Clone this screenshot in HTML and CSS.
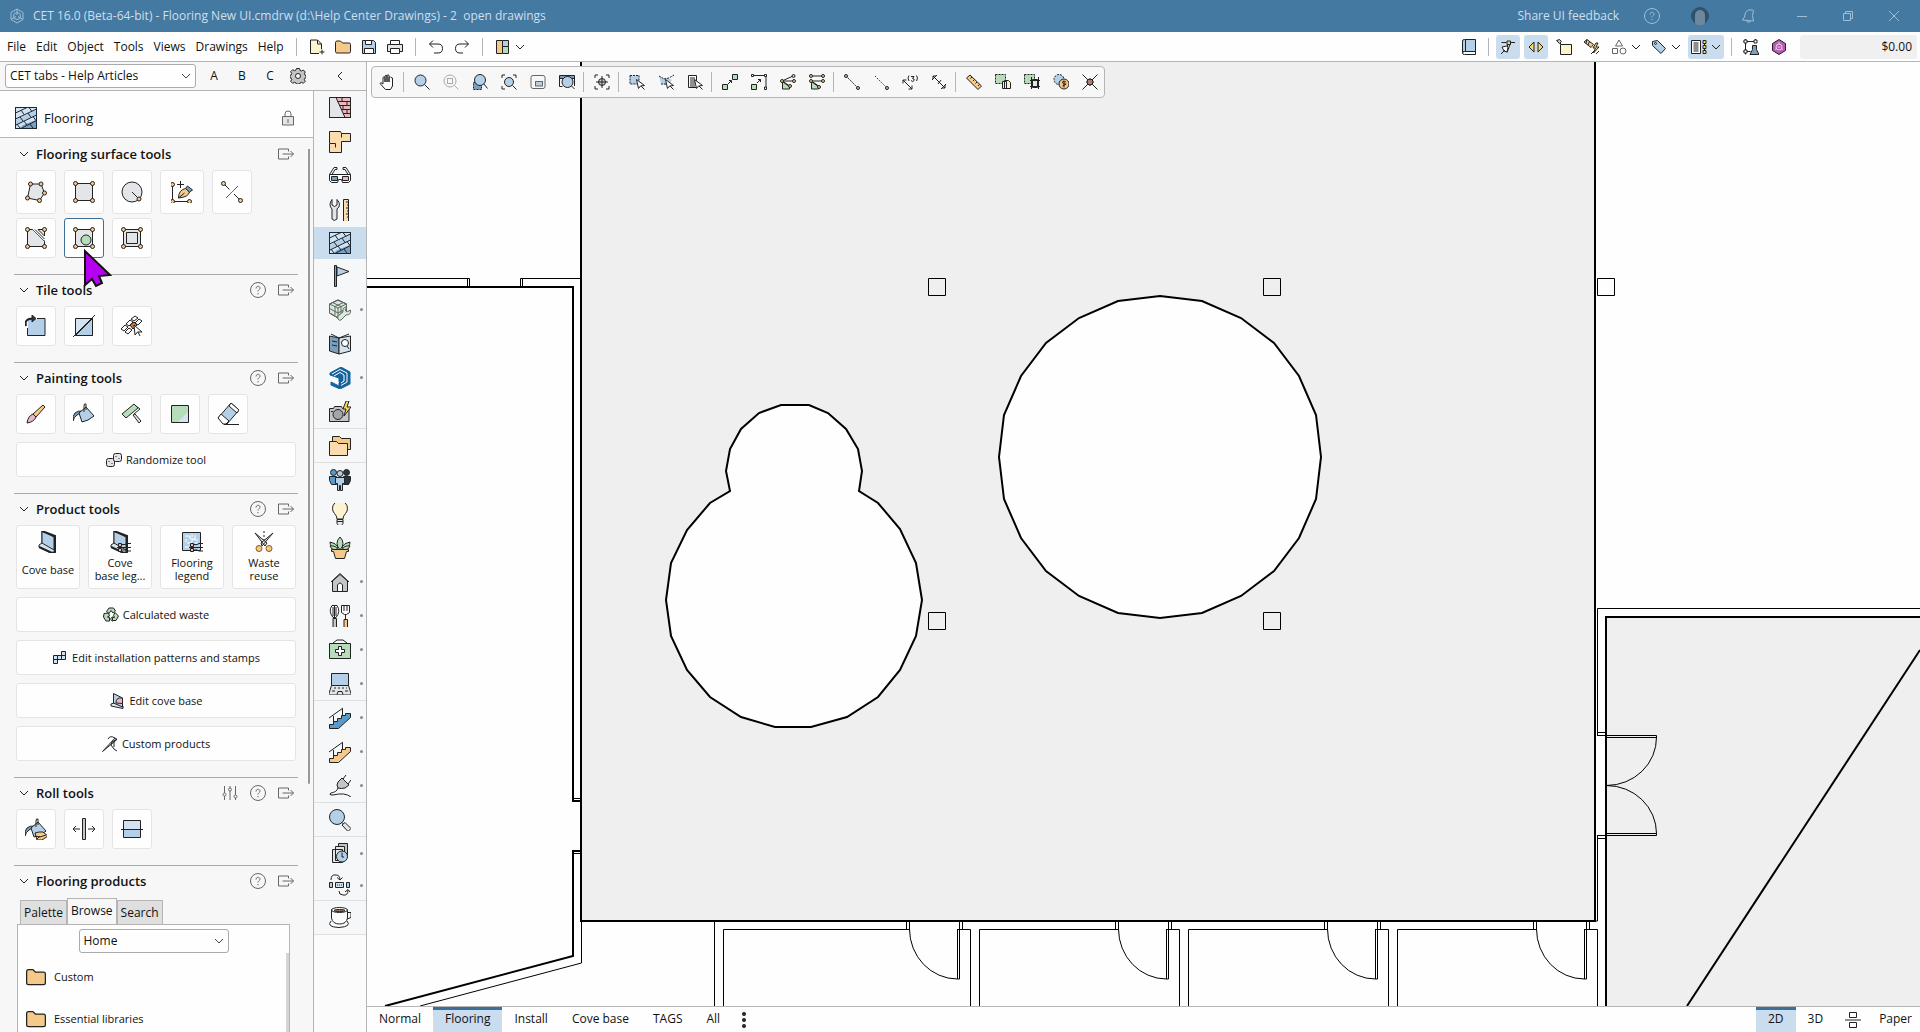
FILE: index.html
```html
<!DOCTYPE html>
<html lang="en">
<head>
  <meta charset="UTF-8" />
  <meta name="viewport" content="width=device-width, initial-scale=1.0"/>
  <title>CET 16.0 - Flooring New UI.cmdrw</title>
  <link rel="stylesheet" href="styles.css">
</head>
<body>
  <!-- icon sprite -->
  <svg class="sprite" aria-hidden="true">
    <!-- common 16px -->
    <symbol id="chev" viewBox="0 0 10 10"><path d="M1 3l4 4 4-4"/></symbol>
    <symbol id="help" viewBox="0 0 16 16"><circle cx="8" cy="8" r="7.500"/><path d="M6 6.500C6 3.500 10.200 3.700 10 6.300 9.800 7.800 8 7.700 8 9.500M8 11v1.300"/></symbol>
    <symbol id="popout" viewBox="0 0 16 16"><path d="M10.500 5.500v-2.500h-10v10h10v-2.500M4.500 8h11M12.500 5l3 3-3 3"/></symbol>
    <symbol id="sliders" viewBox="0 0 16 16"><path d="M2.500 1v7M2.500 11v4M8 1v2M8 6v9M13.500 1v9M13.500 13v2"/><circle cx="2.500" cy="9.500" r="1.500"/><circle cx="8" cy="4.500" r="1.500"/><circle cx="13.500" cy="11.500" r="1.500"/></symbol>
    <symbol id="lock" viewBox="0 0 16 16"><path class="f-gray" d="M2.500 6.500h11v8.500h-11z"/><path d="M5 6.500V4a3 3 0 0 1 6 0v2.500M8 9v4"/></symbol>
    <symbol id="logo" viewBox="0 0 16 16"><path d="M8 1l6 3.500v7L8 15l-6-3.500v-7z"/><circle cx="8" cy="8" r="3.500"/><path d="M8 1v6M2 11.500L7 8.500M14 11.500L9 8.500"/></symbol>
    <symbol id="bell" viewBox="0 0 16 16"><path d="M2.500 12l2-3 1-4.500q2.500-4 7-2.500l1 .5-1 5 1 5.500zM6.500 13q1 2.500 4 .5"/></symbol>

    <!-- menu bar -->
    <symbol id="new" viewBox="0 0 16 16"><path class="f-cream" d="M10 14.500H1.500v-13.500h7l4 4v5M8.500 1v4h4"/><path d="M13 10.500v5M10.500 13h5"/></symbol>
    <symbol id="folder" viewBox="0 0 16 16"><path class="f-orange" d="M.5 3.500q0-1.500 1.500-1.500h3.500l2 2h6.500q1.500 0 1.500 1.500v7q0 1.500-1.500 1.500h-12q-1.500 0-1.500-1.500z"/></symbol>
    <symbol id="save" viewBox="0 0 16 16"><path class="f-blue" d="M1.500 1.500h11l2 2v11h-13z"/><path class="f-white" d="M4.500 1.500h6v4h-6zM3.500 9.500h9v5h-9z"/></symbol>
    <symbol id="print" viewBox="0 0 16 16"><path class="f-gray" d="M.5 5.500h15v7H.5z"/><path class="f-white" d="M3.500 1.500h9v4h-9zM3.500 9.500h9v5h-9z"/></symbol>
    <symbol id="undo" viewBox="0 0 16 16"><path d="M5 1.500l-3.500 3.500L5 8.500M1.500 5H10q4.500 0 4.500 4.500T10 14H6"/></symbol>
    <symbol id="redo" viewBox="0 0 16 16"><path d="M11 1.500l3.500 3.500L11 8.500M14.500 5H6Q1.500 5 1.500 9.500T6 14h3"/></symbol>
    <symbol id="layout" viewBox="0 0 16 16"><path class="f-orange" d="M1.500 1.500h6v13h-6z"/><path class="f-blue" d="M7.500 1.500h6v6h-6z"/><path class="f-green" d="M7.500 7.500h6v7h-6z"/></symbol>
    <symbol id="book" viewBox="0 0 16 16"><path class="f-blue" d="M3.500.5h11v12h-11q-2 0-2 1.500v-12q0-1.500 2-1.500z"/><path class="f-white" d="M14.500 12.500v3h-11q-2 0-2-1.500t2-1.500z"/><path d="M4.500.5v12"/></symbol>
    <symbol id="snap" viewBox="0 0 16 16"><path d="M1.500 3.500h5M10.500 3.500H15M8 5.500l-1 2M10 5.500l-3 8"/><path class="f-white" d="M2 8l5-1 1 1-1 5-3-1z"/><path d="M1 15l4-4"/><path class="f-yellow" d="M7 2h3.500v3.500H7z"/></symbol>
    <symbol id="arrows" viewBox="0 0 16 16"><path class="f-yellow" d="M6 3v10L1 8zM10 3v10l5-5z"/></symbol>
    <symbol id="paste" viewBox="0 0 16 16"><path class="f-cream" d="M4.500 5.500h11v10h-11z"/><path class="f-dark-gray" d="M.5 1.500l3-1 2 2-2 2z"/><path d="M4 4l2 2"/></symbol>
    <symbol id="hammer" viewBox="0 0 16 16"><path class="f-orange" d="M0 3l3-2.500 6.500 5L7 8.500z"/><path d="M3 .5l-1 4M5.500 2.500L4 6"/><path class="f-yellow" d="M12 4l-3 5h2.500l-2 5 5.500-6h-3l2-4z"/><path d="M7 15l3-3M12 15l3-3"/></symbol>
    <symbol id="shapes" viewBox="0 0 16 16"><path d="M8 1l3.500 6h-7zM1.500 9.500h5v5h-5z"/><circle cx="12" cy="12" r="3"/></symbol>
    <symbol id="tag" viewBox="0 0 16 16"><path class="f-blue" d="M1.500 2.500l5-1 8 8-4.500 5-8.500-8z"/><circle cx="4.500" cy="4.500" r="1"/></symbol>
    <symbol id="listnodes" viewBox="0 0 16 16"><path class="f-white" d="M.5 1.500h9v13h-9z"/><path d="M2.500 4h5M2.500 6h5M2.500 8h5M2.500 10h5M2.500 12h5M13.500 3v10"/><path class="f-yellow" d="M12 1.500h3v3h-3zM12 6.500h3v3h-3zM12 11.500h3v3h-3z"/></symbol>
    <symbol id="lab" viewBox="0 0 16 16"><path d="M2.500 0v15.500M.5 2.500h13M.5 12.500h7M12.500 0v4"/><path class="f-white" d="M1 1h3v3H1zM1 11h3v3H1zM11 1h3v3h-3z"/><path class="f-steel" d="M9.500 6.500h4v4l2.500 5h-9l2.500-5z"/></symbol>
    <symbol id="hex" viewBox="0 0 16 16"><path class="f-purple" d="M8 .5l6.500 4v7L8 15.500l-6.500-4v-7z"/><circle class="s-pale" cx="8" cy="8" r="3"/><path class="s-pale" d="M6.500 8h3M8 3v2M4 10.500l2-1M12 10.500l-2-1"/></symbol>
    <symbol id="gear" viewBox="0 0 16 16"><path class="f-dark-gray" d="M6.500.5h3l.5 2 1.500.5 1.800-1 2 2-1 1.800.7 1.200 1 .5v2l-1 .5-.7 1.500 1 1.800-2 2-1.800-1-1.500.7-.5 1h-3l-.5-1-1.500-.7-1.800 1-2-2 1-1.800-.7-1.500-1-.5v-2l1-.5.700-1.500-1-1.800 2-2 1.800 1 1.500-.7z"/><circle class="f-white" cx="8" cy="8" r="2.500"/></symbol>

    <!-- canvas toolbar -->
    <symbol id="hand" viewBox="0 0 16 16"><path class="f-white" d="M4 10V3.500q1-1.500 2 0V8 2q1-1.500 2 0v6-6.500q1-1.500 2 0V8 3.500q1.500-1.500 2 0l1.500.5v8l-2 3.500H6.500L1 9.500q.5-2 3 .5z"/></symbol>
    <symbol id="lens" viewBox="0 0 16 16"><circle class="f-blue" cx="6.500" cy="6.500" r="5.500"/><path d="M10.500 10.500l5 5"/></symbol>
    <symbol id="lens-off" viewBox="0 0 16 16"><g class="s-light"><circle cx="7" cy="7" r="6"/><rect x="4.500" y="4.500" width="5" height="5"/><path d="M11.500 11.500l4 4"/></g></symbol>
    <symbol id="lens-area" viewBox="0 0 16 16"><path class="f-steel" stroke-dasharray="2 1" d="M1.500 8.500h8v7h-8z"/><circle class="f-blue" cx="8" cy="6" r="5.500"/><path d="M12 10l3.500 4.500"/></symbol>
    <symbol id="lens-fit" viewBox="0 0 16 16"><path d="M1 4V1h3M12 1h3v3M1 12v3h3"/><circle class="f-blue" cx="8" cy="8" r="4.500"/><path d="M11.500 11.500l4 4"/></symbol>
    <symbol id="mini" viewBox="0 0 16 16"><rect x="1" y="1.500" width="14" height="13" rx="2"/><rect class="f-blue" x="5.500" y="7.500" width="7" height="4.500"/></symbol>
    <symbol id="lens-window" viewBox="0 0 16 16"><path class="f-steel" d="M.5 1.500h15v3H.5z"/><path d="M.5 4v8.500h3M15.500 4v8"/><circle class="f-blue" cx="8.500" cy="8" r="5.500"/><path d="M12.500 12l3 3"/></symbol>
    <symbol id="target" viewBox="0 0 16 16"><path d="M1 4V1h3M12 1h3v3M1 12v3h3M12 15h3v-3M8 2v12M2 8h12"/><circle class="f-dark-gray" cx="8" cy="8" r="3.500"/><path d="M4.500 8h7M8 4.500v7"/></symbol>
    <symbol id="cursor" viewBox="0 0 16 16"><path class="f-white" d="M7.500 5.500l2 9 2-2.500 4-.5z"/><path d="M12 12l3.500 3.500"/></symbol>
    <symbol id="sel-rect" viewBox="0 0 16 16"><path class="f-blue" stroke-dasharray="2 1" d="M1 1.500h9v8.500H1z"/><use href="#cursor"/></symbol>
    <symbol id="sel-line" viewBox="0 0 16 16"><path class="f-blue s-none" d="M1 2l4 2 5 0 4 2-4 5-7-1z"/><path stroke-dasharray="2 1" d="M1 2l5 3 5-1 5-3M3 10h5"/><use href="#cursor"/></symbol>
    <symbol id="sel-list" viewBox="0 0 16 16"><path class="f-white" d="M1.500 1.500h8v12h-8z"/><path d="M3 4h5M3 6h5M3 8h5M3 10h5M3 12h5"/><use href="#cursor"/></symbol>
    <symbol id="link2" viewBox="0 0 16 16"><path class="f-green" d="M.5 10.500h5v5h-5zM10.500.5h5v5h-5z"/><path d="M6 10l3-3M7 6.500h2.500V9"/></symbol>
    <symbol id="stretch" viewBox="0 0 16 16"><path class="f-green" d="M.5 10.500h5v5h-5z"/><path d="M1 1.500h14v13M6 9l3.500-3.500M7 5.500h2.500V8"/><path class="f-white" d="M.5.500h2v2h-2zM13.500.5h2v2h-2zM13.500 13h2v2.500h-2z"/></symbol>
    <symbol id="poly-a" viewBox="0 0 16 16"><path class="f-green" d="M2.500 7l7 5v3h-7z"/><path d="M2 7l11-5M3 8l7 5M2 7h8l4 0"/><g class="f-orange"><circle cx="2" cy="7" r="1.500"/><circle cx="13.500" cy="2" r="1.500"/><circle cx="10" cy="12" r="1.500"/><circle cx="14" cy="7" r="1.500"/></g></symbol>
    <symbol id="poly-b" viewBox="0 0 16 16"><path class="f-green" d="M2.500 7l7 5v3h-7z"/><path d="M2 2h12M2 7h12M3 8l7 5"/><g class="f-orange"><circle cx="2" cy="2" r="1.500"/><circle cx="14" cy="2" r="1.500"/><circle cx="2" cy="7" r="1.500"/><circle cx="10" cy="13" r="1.500"/><circle cx="14" cy="7" r="1.500"/></g></symbol>
    <symbol id="line-a" viewBox="0 0 16 16"><path stroke-dasharray="2 1" d="M2 2l12 12"/><circle class="f-dark-gray" cx="2" cy="2" r="1.500"/><circle class="f-dark-gray" cx="14" cy="14" r="1.500"/></symbol>
    <symbol id="line-b" viewBox="0 0 16 16"><path stroke-dasharray="1.500 1.500" d="M2 2l12 12"/><circle class="f-dark-gray" cx="14" cy="14" r="1.500"/></symbol>
    <symbol id="dim-3" viewBox="0 0 16 16"><path d="M1 6l9 9M1 9.500V6h3.500M10 11.500V15H6.500M7 1.500q-2 2.500 0 5.500M14.500 1.500q2 2.500 0 5.500M9 2.500h3l-1.500 2q2.500 0 1.500 2t-3 0"/></symbol>
    <symbol id="dim" viewBox="0 0 16 16"><path d="M2 2l12 12M1 6l5-5M10 15l5-5M2 5V2h3M14 11v3h-3M7 10l3-4"/></symbol>
    <symbol id="ruler" viewBox="0 0 16 16"><path class="f-orange" d="M.5 4l3.500-3 11.500 11-3.500 3.500z"/><path d="M6 3L4.500 4.500M8.500 5.500L7 7M11 8L9.500 9.500M13.500 10.500L12 12"/></symbol>
    <symbol id="copy" viewBox="0 0 16 16"><path class="f-green" stroke-dasharray="2 1" d="M.5.500h10v9H.5z"/><path class="f-cream" d="M7.500 7.500h4v7h-4zM9.500 6.500h4l2 2v6h-6z"/></symbol>
    <symbol id="array" viewBox="0 0 16 16"><path class="f-green" stroke-dasharray="2 1" d="M.5.500h10v9H.5z"/><path class="f-gray" d="M8.500 5.500h5v8h-5z"/><path d="M7.500 3v12M14.500 3v12M6 6.500h10M6 12.500h10"/></symbol>
    <symbol id="cost" viewBox="0 0 16 16"><circle class="f-blue" stroke-dasharray="2 1" cx="6" cy="5.500" r="5"/><circle class="f-orange" cx="11" cy="10" r="5"/><path d="M13 8q-4-1.500-3.500.5t3 1.500-3 2M11 6.500v7"/></symbol>
    <symbol id="cross" viewBox="0 0 16 16"><path d="M.5.500l15 15M15.500.5l-15 15M4 8h8M8 4v8"/><circle class="f-brown" cx="8" cy="8" r="3"/></symbol>

    <!-- flooring tools -->
    <symbol id="t-poly" viewBox="0 0 22 22"><path class="f-gray" d="M5.500 3h10.500l3.500 9-5 7.500-12-2.500z"/><g class="f-orange"><circle cx="5.500" cy="3" r="2"/><circle cx="16" cy="3" r="2"/><circle cx="19.500" cy="12" r="2"/><circle cx="14.500" cy="19.500" r="2"/><circle cx="2.500" cy="17" r="2"/></g></symbol>
    <symbol id="t-corners" viewBox="0 0 22 22"><g class="f-orange"><circle cx="2.500" cy="2.500" r="2"/><circle cx="19.500" cy="2.500" r="2"/><circle cx="2.500" cy="19.500" r="2"/><circle cx="19.500" cy="19.500" r="2"/></g></symbol>
    <symbol id="t-rect" viewBox="0 0 22 22"><path class="f-gray" d="M2.500 2.500h17v17h-17z"/><use href="#t-corners"/></symbol>
    <symbol id="t-circle" viewBox="0 0 22 22"><circle class="f-gray" cx="11" cy="11" r="10"/><path d="M11 11l7 7"/><circle class="f-orange" cx="18" cy="18" r="2"/></symbol>
    <symbol id="t-pen" viewBox="0 0 22 22"><path d="M1.500 4v16.500h16M9.500 0v7M6 3.500h7"/><path class="f-orange" d="M7.500 17q0-8 7-9.500l4 3.500q-1 5-11 6z"/><path class="f-steel" d="M14.500 7.500l2-2.500 5 4-3 2z"/><path d="M7.500 17l6-5"/><g class="f-orange"><circle cx="1.500" cy="3.500" r="2"/><circle cx="1.500" cy="20.500" r="2"/><circle cx="18.500" cy="20.500" r="2"/></g></symbol>
    <symbol id="t-cut" viewBox="0 0 22 22"><path d="M2.500 2.500l6 6M13 13l6 6"/><path class="s-red" d="M5 17L17 5"/><circle class="f-orange" cx="2.500" cy="2.500" r="2"/><circle class="f-orange" cx="19.500" cy="19.500" r="2"/></symbol>
    <symbol id="t-split" viewBox="0 0 22 22"><path class="f-gray" d="M8 2.500H2.500v17h17v-6M13 2.500h6.500V9"/><path class="s-red" d="M7.500 2.500l12 12"/><path d="M10 2.500l9.500 9.500M13 2.500L19.500 9"/><use href="#t-corners"/></symbol>
    <symbol id="t-hole" viewBox="0 0 22 22"><path class="f-gray" d="M2.500 2.500h17v17h-17z"/><circle class="f-green" cx="13" cy="13" r="5"/><use href="#t-corners"/></symbol>
    <symbol id="t-inset" viewBox="0 0 22 22"><path class="f-gray" d="M2.500 2.500h17v17h-17z"/><path d="M5.500 5.500h11v11h-11z"/><use href="#t-corners"/></symbol>
    <symbol id="t-rotate" viewBox="0 0 22 22"><path class="f-blue s-none" d="M3 4h17v17H3z"/><path d="M12 3.500h8v17H2.500V13"/><path class="s-bold" d="M1 11Q-1 3.500 8 3.500"/><path class="f-black" d="M7 0l4 3.500L7 7z"/></symbol>
    <symbol id="t-diag" viewBox="0 0 22 22"><path class="f-light-blue" d="M2.500 3.500h17v17h-17z"/><path class="f-blue" d="M19.500 3.500v17h-17z"/><path d="M0 22L22 0"/></symbol>
    <symbol id="t-planks" viewBox="0 0 22 22"><path class="f-white" d="M0 14l4-4 3 2-4 4zM5 9l4-4 3 2-4 4zM10 4l4-3 3 2-4 3zM4 17l4-4 3 2-4 4zM14 8l4-4 3 2-4 4z"/><path class="f-deep-orange" d="M9 10l4-3 3 3-4 4z"/><path class="f-white" d="M13 10l1 10 2.500-3 4.500 0z"/><path d="M17 17l2 4"/></symbol>
    <symbol id="t-brush" viewBox="0 0 22 22"><path class="f-orange" d="M8 11L18 2l2 2-9 10z"/><path class="f-pink" d="M2 20q1-7 6-9l3 3q-2 5-9 6z"/></symbol>
    <symbol id="t-bucket" viewBox="0 0 22 22"><path class="f-steel" d="M0 18q-1-11 10-10l-6 4q-3 2-4 6z"/><path class="f-blue" d="M13 4l8 9q-6 5-12 6L6 10z"/><path d="M11 9V3q0-3 2-2v6"/></symbol>
    <symbol id="t-roller" viewBox="0 0 22 22"><path class="f-green" d="M1 11L13 1l4 4L5 15z"/><path d="M15 3l4 3-6 5"/><path class="f-gray" d="M12 12l2-1 6 7-2 2z"/></symbol>
    <symbol id="t-square" viewBox="0 0 22 22"><path class="f-green" d="M2.500 2.500h17v17h-17z"/><path class="f-light-blue s-none" d="M19 9v10H9z"/></symbol>
    <symbol id="t-eraser" viewBox="0 0 22 22"><path class="f-blue" d="M1 15L14 0l8 7-12 14H7z"/><path class="f-white" d="M1 15l3-4 8 7-3 3H6zM14 0l8 7-2 3-8-7z"/><path d="M7 21.500h15"/></symbol>
    <symbol id="t-pour" viewBox="0 0 22 22"><use href="#t-bucket"/><path class="f-orange" d="M10 15l4-1 4 0 5 4-6 4h-5z"/><path d="M10 18l5 1 6-2M12 21l3-3"/></symbol>
    <symbol id="t-seam" viewBox="0 0 22 22"><path class="f-dark-gray" d="M9.500.5h3v21h-3z"/><path d="M0 11h7M3 8l-3 3 3 3M15 11h7M19 8l3 3-3 3"/></symbol>
    <symbol id="t-join" viewBox="0 0 22 22"><path class="f-light-blue" d="M2.500 2.500h17v9h-17z"/><path class="f-blue" d="M2.500 11.500h17v8h-17z"/><path d="M-1 11.500h24"/></symbol>
    <symbol id="p-cove" viewBox="0 0 22 22"><path class="f-light-blue" d="M2 14l3-2V0l13 6v15l-3 1.500L2 16z"/><path class="f-blue" d="M5 0l12 6v13L5 12z"/><path class="s-bold" d="M5 0l13 5v16l-3 1L2 16"/></symbol>
    <symbol id="p-plug" viewBox="0 0 22 22"><path class="f-pink" d="M9.500 12.500h3v3h-3zM9.500 17.500h3v3h-3z"/><path d="M13 13.500h3l2-1h5M13 19h3l2 1h5M8 16.500h15"/></symbol>
    <symbol id="p-covelegend" viewBox="0 0 22 22"><use href="#p-cove"/><use href="#p-plug"/></symbol>
    <symbol id="p-legend" viewBox="0 0 22 22"><path class="f-blue" d="M1.500 1.500h18v18h-18z"/><path class="s-white" d="M4 5h5v3h5M6 12h4l2-4M4 16h4M14 4v5h3M5 8v3M11 3v3M14 12h3"/><use href="#p-plug"/></symbol>
    <symbol id="p-scissors" viewBox="0 0 22 22"><path class="f-gray" d="M2 2l10 13 2-3zM20 2L9 15l-1-3z"/><path stroke-dasharray="2 2" d="M11 0v9"/><circle class="f-orange s-brown" cx="6" cy="17.500" r="3"/><circle class="f-orange s-brown" cx="16" cy="17.500" r="3"/></symbol>
    <symbol id="w-dice" viewBox="0 0 16 16"><rect class="f-gray" x=".5" y="6.500" width="8" height="8" rx="2"/><rect class="f-gray" x="7.500" y="1.500" width="8" height="8" rx="2"/><path d="M3 9v1M6 11v1M10 4v1M13 6v1"/></symbol>
    <symbol id="w-recycle" viewBox="0 0 16 16"><g class="f-green"><path d="M3.500 4.500L6 1h4.500l2 3-2.500 2-2-2.500-2 3z"/><path d="M12 5.500L15.500 9l-2.500 4.500H9.500v-3h2l-1-2z"/><path d="M1 6.500l4.500-.5 1 3-2 1 2 .5V14H3L.5 10z"/></g><path d="M9.500 9.500L7.500 12l2 2.500"/></symbol>
    <symbol id="w-pattern" viewBox="0 0 16 16"><path class="f-light-blue" d="M1.500 5.500h4v8h-4zM5.500 5.500h4v4h-4zM9.500 1.500h4v8h-4z"/><path d="M1.500 9.500h8M9.500 5.500h4"/></symbol>
    <symbol id="w-cove" viewBox="0 0 16 16"><path class="f-gray" d="M2 11l3-1 9 3v2.500L2 13z"/><path class="f-blue" d="M4.500.5l9 4.500v9l-9-4z"/><path class="f-pink" d="M7 10q0-6 6.500-5v5.500z"/></symbol>
    <symbol id="w-custom" viewBox="0 0 16 16"><path class="f-gray" d="M.5 15.500L13 2l2 1.500z"/><path d="M13 2Q8-1 6 3M15 3l-5 3-1 3 3 4 3 2M12 5v6"/></symbol>

    <!-- side bar -->
    <symbol id="s-wall" viewBox="0 0 22 22"><path class="f-gray" d="M.5.500h21v20H.5z"/><path class="f-pink" d="M7 .5h14.500v20H16z"/><path d="M0 20.500h22M8.500 4.500h13M10.500 8.500h11M12 12.500h9M14 16.500h7M13 .5v4M18 4.500v4M14 8.500v4M18 12.500v4"/></symbol>
    <symbol id="s-plan" viewBox="0 0 22 22"><path class="f-light-orange" d="M.5.500h11l1 2h9v8h-9v11H.5v-9z"/><path d="M1 12.500h5.500v4M12.500 2.500v4"/></symbol>
    <symbol id="s-glasses" viewBox="0 0 22 22"><path class="f-white" d="M.5 9.500h21v6l-2 2h-6l-1-3h-3l-1 3h-6l-2-2z"/><path class="f-steel" d="M2.500 11.500h6v4h-6z"/><path class="f-pink" d="M13.500 11.500h6v4h-6z"/><path d="M.5 9.500L5 2.500l3 0v2l-2 0-3 5M21.500 9.500L17 2.500l-3 0v2l2 0 3 5"/></symbol>
    <symbol id="s-tools" viewBox="0 0 22 22"><path class="f-gray" d="M3 .5Q-1 6 3 10v10q2 3 5 0V10q5-4 0-9.500V6L5.500 7.500 3 6z"/><path class="f-light-orange" d="M14.500.5h5v22h-5z"/><path d="M17 3h3M18 6h2M17 9h3M18 12h2M17 15h3M18 18h2"/></symbol>
    <symbol id="s-floor" viewBox="0 0 22 22"><path class="f-light-blue" d="M.5.500h21v21H.5z"/><path class="f-steel s-none" d="M21 13v8H5l3-3z"/><path class="f-blue s-none" d="M1 13L21 3v5L1 18z"/><path class="s-mid" d="M.5.500h21v21H.5zM.5 6L12 .5M.5 12L21.500 2M1 18L21.500 8M6 21.500L21.500 13.500M6 3l3 4.500M14 .5l3 4M5 10l3 4M13 6l3 4.500M9 14l3 4M18 9.500l3 4M15 17l3 4M2 17l3 4"/></symbol>
    <symbol id="s-flag" viewBox="0 0 22 22"><path class="f-blue" d="M8 2l12 4.500L8 11z"/><path class="f-steel" d="M5.500.5h2v21h-2z"/></symbol>
    <symbol id="s-cube" viewBox="0 0 22 22"><path class="f-pale-green" d="M.5 5L9 1l8.500 4v9L9 19 .5 14z"/><path class="s-mute" d="M.5 5L9 1l8.500 4v9L9 19 .5 14zM.5 5L9 9l8.500-4M9 9v10M3.500 3.500l8.500 4v9M14.500 3.500L6 7.500v9M.5 9.500L9 14l8.500-4.500"/><path class="f-pale-green s-mute" d="M9 20q-1-2 1-4l4-3q-1-5 4-5l-2 3 2 2 3.500-2q1 5-4.500 5l-5 5q-2 1-3-1z"/></symbol>
    <symbol id="s-catalog" viewBox="0 0 22 22"><path class="f-steel" d="M.5 3l9.500 2v16L.5 18z"/><path class="f-light-blue" d="M21.500 3L10 5v16l11.500-3z"/><circle class="f-white" cx="16" cy="10" r="3.500"/><path d="M18 13l2 3M3 8l5 1M3 12l5 1M2 1l8 4 10-4"/></symbol>
    <symbol id="s-sketch" viewBox="0 0 22 22"><path class="f-sketch" d="M1 6L12 0l9 5v12l-10 5-9-4v-3l8 4V11L1 8z"/><path class="s-white" d="M3 7l8-4.500L18 6v9l-6 3.500M5 9l6-3.500 4 2.500v6l-3 2M2 12l8 3.500"/></symbol>
    <symbol id="s-camera" viewBox="0 0 22 22"><path class="f-dark-gray" d="M.5 7.500h4l1-2h7l1 2h6.500v13H.5z"/><circle class="f-dim" cx="9" cy="13.500" r="5"/><path d="M2 10.500h2"/><path class="f-yellow" d="M17 0l-3 8h3l-2 7 7-9h-4l2-6z"/></symbol>
    <symbol id="s-folders" viewBox="0 0 22 22"><path class="f-orange" d="M3.500 1.500h7l2 2h9v11h-18z"/><path class="f-light-orange" d="M.5 6.500h7l2 2h9v12H.5z"/></symbol>
    <symbol id="s-people" viewBox="0 0 22 22"><circle class="f-deep-blue" cx="4.500" cy="3.500" r="3"/><path class="f-deep-blue" d="M.5 7.500h7v8h-5l-2-4z"/><circle class="f-black" cx="17.500" cy="3.500" r="3"/><path class="f-black" d="M14.500 7.500h7v4l-2 4h-5z"/><circle class="f-blue" cx="11" cy="4.500" r="3"/><path class="f-blue" d="M6.500 8.500h9v6h-2v7h-2v-5h-1v5h-2v-7h-2z"/></symbol>
    <symbol id="s-bulb" viewBox="0 0 22 22"><path class="f-cream" d="M8 16q0-3-2.500-5.500A7.500 7.500 0 1 1 16.500 10.500Q14 13 14 16z"/><path class="f-gray" d="M8 16.500h6v4l-1.500 2h-3l-1.500-2zM8 18.500h6"/></symbol>
    <symbol id="s-plant" viewBox="0 0 22 22"><g class="f-green"><path d="M7 13Q1 11 1 5q6 1 8 5zM15 13q6-2 6-8-6 1-8 5z"/><path d="M11 13Q5 6 11 0q6 6 0 13z"/><path d="M9 13Q7 8 1 9q1 4 6 4zM13 13q2-5 8-4-1 4-6 4z"/></g><path class="f-orange" d="M2.500 12.500h17v2h-2l-2 7h-9l-2-7h-2z"/></symbol>
    <symbol id="s-house" viewBox="0 0 22 22"><path class="f-dark-gray" d="M3.500 20.500V10L11 3.500l7.500 6.500v10.500z"/><path class="f-white" d="M8.500 20.500V14q2.500-4 5 0v6.500z"/><path d="M2 11l9-8.500L20 11"/></symbol>
    <symbol id="s-kitchen" viewBox="0 0 22 22"><path class="f-white" d="M3 .5h5q4 6-1 12H4Q-1 6 3 .5zM4 2v9M7 2v9M5.500 1v11M12.500.5h8v7l-3 2h-2l-3-2zM15 1v5M18 1v5M16.500 10v4"/><path class="f-dark-gray" d="M4 13.500h3.500v9H4z"/><path class="f-orange" d="M15 14.500h3.500v8H15z"/></symbol>
    <symbol id="s-medical" viewBox="0 0 22 22"><path d="M4 4L8 1h6l4 3"/><path class="f-green" d="M.5 4.500h21v15H.5z"/><path class="f-white" d="M9.500 7.500h3v3h3v3h-3v3h-3v-3h-3v-3h3z"/></symbol>
    <symbol id="s-laptop" viewBox="0 0 22 22"><path class="f-blue" d="M2.500.5h17v12h-17z"/><path class="f-gray" d="M2.500 12.500h17l3 9.500h-23z"/><path d="M5 15h2M9 15h2M13 15h2M17 15h1M3 18h3M16 18h3M8 21.500l1-3h4l1 3"/></symbol>
    <symbol id="s-stairs" viewBox="0 0 22 22"><path d="M.5 21.500v-4h4v-3h4v-3h4v-3h4v-2h5v4l-12 11z"/><path d="M0 11L14 1M4.500 9v7M13.500 2v7"/></symbol>
    <symbol id="s-power" viewBox="0 0 22 22"><path class="f-dark-gray" d="M9 7l4-4 7 7-4 3q-4 1-7 0-2-3 0-6z"/><path d="M14 4l3-4M19 9l3-4M9 13q-1 4-7 5-3 2 2 2 12-3 18 2"/></symbol>
    <symbol id="s-search" viewBox="0 0 22 22"><circle class="f-blue" cx="8" cy="8" r="7.500"/><path class="f-gray" d="M13 16l3-2.500 6 6-3 3zM12.500 13l2 2"/></symbol>
    <symbol id="s-history" viewBox="0 0 22 22"><path class="f-dark-gray" d="M9.500 1.500h9v14h-9z"/><path class="f-gray" d="M6.500 4.500h9v14h-9zM3.500 7.500h10v13h-10z"/><circle class="f-blue" cx="13" cy="14.500" r="5.500"/><path d="M13 10.500v4.500h2"/></symbol>
    <symbol id="s-flow" viewBox="0 0 22 22"><path class="f-blue" d="M.5 8.500h3v5h-3zM17.500 8.500h3v5h-3z"/><path class="f-light-blue" d="M6.500 8.500h8v5h-8z"/><path d="M8 11h1M10 11h1M12 11h1M2 6q0-6 5-5 4 0 4 5M8 3.500l3 2.500 2.500-2.500M19 16q0 6-5 5-4 0-4-4M16 18l3-2.500 2 2.500"/></symbol>
    <symbol id="s-coffee" viewBox="0 0 22 22"><path class="f-white" d="M2 14q-5 6 8 6.500 13-1 8-6.500"/><path class="f-white" d="M18 5.500h4v5l-4 1.500"/><path class="f-white" d="M2.500 3v8q1 6 8 6t8-6V3z"/><ellipse class="f-white" cx="10.500" cy="3" rx="8" ry="2.500"/><ellipse class="f-brown" cx="10.500" cy="3.500" rx="5.500" ry="1"/></symbol>
  </svg>

  <header class="titlebar">
    <svg class="icon16"><use href="#logo"/></svg>
    <span class="title">CET 16.0 (Beta-64-bit) - Flooring New UI.cmdrw (d:\Help Center Drawings) - 2&nbsp; open drawings</span>
    <a class="feedback" href="#">Share UI feedback</a>
    <button class="title-btn" aria-label="Help"><svg class="icon16"><use href="#help"/></svg></button>
    <button class="title-btn avatar-btn" aria-label="Account"><span class="avatar"><span class="avatar-head"></span></span></button>
    <button class="title-btn bell-btn" aria-label="Notifications"><svg class="icon16"><use href="#bell"/></svg></button>
    <button class="title-btn" aria-label="Minimize"><svg class="icon10" viewBox="0 0 10 10"><path d="M0 5.500h10"/></svg></button>
    <button class="title-btn" aria-label="Restore"><svg class="icon10" viewBox="0 0 10 10"><path d="M.5 2.500h7v7h-7zM2.500 2.500v-2h7v7h-2"/></svg></button>
    <button class="title-btn" aria-label="Close"><svg class="icon10" viewBox="0 0 10 10"><path d="M0 0l10 10M10 0L0 10"/></svg></button>
  </header>

  <nav class="menubar">
    <div class="menus">
      <button>File</button><button>Edit</button><button>Object</button><button>Tools</button><button>Views</button><button>Drawings</button><button>Help</button>
    </div>
    <span class="sep"></span>
    <div class="quick">
      <button aria-label="New"><svg class="icon16"><use href="#new"/></svg></button>
      <button aria-label="Open"><svg class="icon16"><use href="#folder"/></svg></button>
      <button aria-label="Save"><svg class="icon16"><use href="#save"/></svg></button>
      <button aria-label="Print"><svg class="icon16"><use href="#print"/></svg></button>
    </div>
    <span class="sep"></span>
    <div class="quick">
      <button aria-label="Undo"><svg class="icon16"><use href="#undo"/></svg></button>
      <button aria-label="Redo"><svg class="icon16"><use href="#redo"/></svg></button>
    </div>
    <span class="sep"></span>
    <button class="drop" aria-label="Layout"><svg class="icon16"><use href="#layout"/></svg><svg class="icon10"><use href="#chev"/></svg></button>

    <div class="menubar-right">
      <button class="mode" aria-label="Catalogue"><svg class="icon16"><use href="#book"/></svg></button>
      <span class="sep"></span>
      <button class="mode on" aria-label="Snap"><svg class="icon16"><use href="#snap"/></svg></button>
      <button class="mode on" aria-label="Mirror"><svg class="icon16"><use href="#arrows"/></svg></button>
      <button class="mode" aria-label="Paste"><svg class="icon16"><use href="#paste"/></svg></button>
      <button class="mode" aria-label="Build"><svg class="icon16"><use href="#hammer"/></svg></button>
      <button class="drop" aria-label="Shapes"><svg class="icon16 faded"><use href="#shapes"/></svg><svg class="icon10"><use href="#chev"/></svg></button>
      <button class="drop" aria-label="Tags"><svg class="icon16"><use href="#tag"/></svg><svg class="icon10"><use href="#chev"/></svg></button>
      <button class="drop on" aria-label="Lists"><svg class="icon16"><use href="#listnodes"/></svg><svg class="icon10"><use href="#chev"/></svg></button>
      <span class="sep"></span>
      <button class="mode" aria-label="Lab"><svg class="icon16"><use href="#lab"/></svg></button>
      <button class="mode" aria-label="Marketplace"><svg class="icon16"><use href="#hex"/></svg></button>
      <output class="price">$0.00</output>
    </div>
  </nav>

  <div class="main">
    <aside class="sidebar">
      <div class="tabset">
        <select aria-label="Tab set"><option>CET tabs - Help Articles</option></select>
        <button>A</button><button>B</button><button>C</button>
        <button aria-label="Settings"><svg class="icon16"><use href="#gear"/></svg></button>
        <button class="collapse" aria-label="Collapse"><svg class="icon10"><use href="#chev"/></svg></button>
      </div>

      <div class="sidebar-body">
        <div class="panel">
          <div class="panel-head">
            <svg class="icon22"><use href="#s-floor"/></svg>
            <h1>Flooring</h1>
            <button aria-label="Lock"><svg class="icon16 soft"><use href="#lock"/></svg></button>
          </div>

          <div class="panel-scroll">
            <section>
              <h2><svg class="icon10"><use href="#chev"/></svg>Flooring surface tools<span class="acts"><button aria-label="Pop out"><svg class="icon16"><use href="#popout"/></svg></button></span></h2>
              <div class="tools">
                <button class="tool" aria-label="Polygon"><svg class="icon22"><use href="#t-poly"/></svg></button>
                <button class="tool" aria-label="Rectangle"><svg class="icon22"><use href="#t-rect"/></svg></button>
                <button class="tool" aria-label="Circle"><svg class="icon22"><use href="#t-circle"/></svg></button>
                <button class="tool big" aria-label="Pen"><svg class="icon22"><use href="#t-pen"/></svg></button>
                <button class="tool" aria-label="Break line"><svg class="icon22"><use href="#t-cut"/></svg></button>
              </div>
              <div class="tools second">
                <button class="tool" aria-label="Split"><svg class="icon22"><use href="#t-split"/></svg></button>
                <button class="tool active" aria-label="Hole"><svg class="icon22"><use href="#t-hole"/></svg>
                  <svg class="pointer" viewBox="0 0 28 38"><path d="M1 1v34l7-6 4 7 6-3-3-7 11-1z"/></svg></button>
                <button class="tool" aria-label="Inset"><svg class="icon22"><use href="#t-inset"/></svg></button>
              </div>
            </section>

            <section>
              <h2><svg class="icon10"><use href="#chev"/></svg>Tile tools<span class="acts"><button aria-label="Help"><svg class="icon16"><use href="#help"/></svg></button><button aria-label="Pop out"><svg class="icon16"><use href="#popout"/></svg></button></span></h2>
              <div class="tools">
                <button class="tool" aria-label="Rotate tile"><svg class="icon22"><use href="#t-rotate"/></svg></button>
                <button class="tool" aria-label="Split tile"><svg class="icon22"><use href="#t-diag"/></svg></button>
                <button class="tool" aria-label="Pick planks"><svg class="icon22"><use href="#t-planks"/></svg></button>
              </div>
            </section>

            <section>
              <h2><svg class="icon10"><use href="#chev"/></svg>Painting tools<span class="acts"><button aria-label="Help"><svg class="icon16"><use href="#help"/></svg></button><button aria-label="Pop out"><svg class="icon16"><use href="#popout"/></svg></button></span></h2>
              <div class="tools">
                <button class="tool" aria-label="Brush"><svg class="icon22"><use href="#t-brush"/></svg></button>
                <button class="tool" aria-label="Bucket"><svg class="icon22"><use href="#t-bucket"/></svg></button>
                <button class="tool" aria-label="Roller"><svg class="icon22"><use href="#t-roller"/></svg></button>
                <button class="tool" aria-label="Area"><svg class="icon22"><use href="#t-square"/></svg></button>
                <button class="tool" aria-label="Eraser"><svg class="icon22"><use href="#t-eraser"/></svg></button>
              </div>
              <button class="wide"><svg class="icon16"><use href="#w-dice"/></svg>Randomize tool</button>
            </section>

            <section>
              <h2><svg class="icon10"><use href="#chev"/></svg>Product tools<span class="acts"><button aria-label="Help"><svg class="icon16"><use href="#help"/></svg></button><button aria-label="Pop out"><svg class="icon16"><use href="#popout"/></svg></button></span></h2>
              <div class="cards">
                <button class="card"><svg class="icon22"><use href="#p-cove"/></svg><span>Cove base</span></button>
                <button class="card"><svg class="icon22"><use href="#p-covelegend"/></svg><span>Cove<br>base leg...</span></button>
                <button class="card"><svg class="icon22"><use href="#p-legend"/></svg><span>Flooring legend</span></button>
                <button class="card"><svg class="icon22"><use href="#p-scissors"/></svg><span>Waste<br>reuse</span></button>
              </div>
              <button class="wide"><svg class="icon16"><use href="#w-recycle"/></svg>Calculated waste</button>
              <button class="wide"><svg class="icon16"><use href="#w-pattern"/></svg>Edit installation patterns and stamps</button>
              <button class="wide"><svg class="icon16"><use href="#w-cove"/></svg>Edit cove base</button>
              <button class="wide"><svg class="icon16"><use href="#w-custom"/></svg>Custom products</button>
            </section>

            <section>
              <h2><svg class="icon10"><use href="#chev"/></svg>Roll tools<span class="acts"><button aria-label="Options"><svg class="icon16"><use href="#sliders"/></svg></button><button aria-label="Help"><svg class="icon16"><use href="#help"/></svg></button><button aria-label="Pop out"><svg class="icon16"><use href="#popout"/></svg></button></span></h2>
              <div class="tools">
                <button class="tool" aria-label="Fill roll"><svg class="icon22"><use href="#t-pour"/></svg></button>
                <button class="tool" aria-label="Move seam"><svg class="icon22"><use href="#t-seam"/></svg></button>
                <button class="tool" aria-label="Split roll"><svg class="icon22"><use href="#t-join"/></svg></button>
              </div>
            </section>

            <section class="products">
              <h2><svg class="icon10"><use href="#chev"/></svg>Flooring products<span class="acts"><button aria-label="Help"><svg class="icon16"><use href="#help"/></svg></button><button aria-label="Pop out"><svg class="icon16"><use href="#popout"/></svg></button></span></h2>
              <div class="tabs" role="tablist">
                <button role="tab">Palette</button><button role="tab" class="current" aria-selected="true">Browse</button><button role="tab">Search</button>
              </div>
              <div class="browser">
                <select aria-label="Library"><option>Home</option></select>
                <div class="library">
                  <button class="lib"><svg class="icon20"><use href="#folder"/></svg>Custom</button>
                  <button class="lib"><svg class="icon20"><use href="#folder"/></svg>Essential libraries</button>
                </div>
              </div>
            </section>
          </div>
        </div>

        <nav class="rail">
          <div class="group">
            <button aria-label="Walls"><svg class="icon22"><use href="#s-wall"/></svg></button>
            <button aria-label="Floor plan"><svg class="icon22"><use href="#s-plan"/></svg></button>
            <button aria-label="3D view"><svg class="icon22"><use href="#s-glasses"/></svg></button>
            <button aria-label="Utilities"><svg class="icon22"><use href="#s-tools"/></svg></button>
            <button class="current" aria-label="Flooring"><svg class="icon22"><use href="#s-floor"/></svg></button>
            <button aria-label="Flags"><svg class="icon22"><use href="#s-flag"/></svg></button>
            <button class="more" aria-label="Models"><svg class="icon22"><use href="#s-cube"/></svg></button>
            <button aria-label="Catalogues"><svg class="icon22"><use href="#s-catalog"/></svg></button>
            <button class="more" aria-label="SketchUp"><svg class="icon22"><use href="#s-sketch"/></svg></button>
            <button aria-label="Photo"><svg class="icon22"><use href="#s-camera"/></svg></button>
          </div>
          <div class="group">
            <button aria-label="Folders"><svg class="icon22"><use href="#s-folders"/></svg></button>
          </div>
          <div class="group">
            <button aria-label="People"><svg class="icon22"><use href="#s-people"/></svg></button>
            <button aria-label="Lighting"><svg class="icon22"><use href="#s-bulb"/></svg></button>
            <button aria-label="Plants"><svg class="icon22"><use href="#s-plant"/></svg></button>
            <button class="more" aria-label="Home"><svg class="icon22"><use href="#s-house"/></svg></button>
            <button class="more" aria-label="Kitchen"><svg class="icon22"><use href="#s-kitchen"/></svg></button>
            <button class="more" aria-label="Healthcare"><svg class="icon22"><use href="#s-medical"/></svg></button>
            <button class="more" aria-label="Electronics"><svg class="icon22"><use href="#s-laptop"/></svg></button>
          </div>
          <div class="group">
            <button class="more" aria-label="Stairs"><svg class="icon22 f-deep-blue"><use href="#s-stairs"/></svg></button>
            <button class="more" aria-label="Stairs legacy"><svg class="icon22 f-orange"><use href="#s-stairs"/></svg></button>
            <button class="more" aria-label="Power"><svg class="icon22"><use href="#s-power"/></svg></button>
          </div>
          <div class="group">
            <button aria-label="Find"><svg class="icon22"><use href="#s-search"/></svg></button>
          </div>
          <div class="group compact">
            <button class="more" aria-label="History"><svg class="icon22"><use href="#s-history"/></svg></button>
            <button class="more" aria-label="Replace"><svg class="icon22"><use href="#s-flow"/></svg></button>
          </div>
          <div class="group">
            <button aria-label="Coffee"><svg class="icon22"><use href="#s-coffee"/></svg></button>
          </div>
        </nav>
      </div>
    </aside>

    <main class="workspace">
      <div class="canvas">
        <svg class="plan" viewBox="367 62 1553 944" preserveAspectRatio="xMinYMin slice">
          <defs>
            <!-- door with its posts and the wall to the right -->
            <g id="bay">
              <path d="M906.500 921v8M909.500 921v8M959.500 921v8M962.500 921v8M957.500 929v50h2v-50M957 929.500h13.500V1006M909.500 929A48 50 0 0 0 957.500 979"/>
            </g>
          </defs>

          <!-- main floor -->
          <path class="floor" d="M581 50V921H1595V50z"/>
          <path class="cutout" d="M1160 296L1202 301 1241 318 1274 343 1299 376 1316 415 1321 457 1316 499 1299 538 1274 571 1241 596 1202 613 1160 618 1118 613 1079 596 1046 571 1021 538 1004 499 999 457 1004 415 1021 376 1046 343 1079 318 1118 301z"/>
          <path class="cutout" d="M781 405H809L828 413 846 429 858 449 862 471 859 491 878 503 900 529 916 563 922 600 916 636 900 670 878 697 847 717 811 727H775L741 717 710 697 687 670 671 636 666 600 671 563 687 530 710 503 730 491 726 471 730 449 741 429 759 413z"/>

          <!-- grips -->
          <path class="thin" d="M928.500 278.500h17v17h-17zM1263.500 278.500h17v17h-17zM1597.500 278.500h17v17h-17zM928.500 612.500h17v17h-17zM1263.500 612.500h17v17h-17z"/>

          <!-- left room -->
          <path class="wall" d="M367 287H573V801H581M581 851H573V956L385 1006"/>
          <path class="thin" d="M367 278.500H469.500V287M467.500 278v9M581 278.500H520.500V287M522.500 278v9M573 798.500h8M573 853.500h8M581.500 921V963L420 1006"/>

          <!-- bottom rooms -->
          <g class="thin">
            <path d="M714.500 921V1006M723.500 1006V929.500H910M979.500 1006V929.500H1118M1188.500 1006V929.500H1327M1397.500 1006V929.500H1536"/>
            <use href="#bay"/>
            <use href="#bay" x="209"/>
            <use href="#bay" x="418"/>
            <use href="#bay" x="627"/>
          </g>

          <!-- right room -->
          <path class="floor" d="M1930 617H1606V1016H1930"/>
          <path class="wall" d="M1687 1006L1920 650"/>
          <path class="thin" d="M1920 608.500H1597.500V735M1597 732.500h9M1597 735.500h9M1597 835.500h9M1597 838.500h9M1597.500 836v85h-3"/>
          <path class="thin" d="M1607 735.500h49.500v2H1607M1656.500 737A50 48 0 0 1 1606.500 785.500A50 48 0 0 1 1656.500 833.500M1607 833.500h49.500v2H1607"/>
        </svg>

        <div class="view-tools">
          <button aria-label="Pan"><svg class="icon16"><use href="#hand"/></svg></button>
          <span class="sep"></span>
          <button aria-label="Zoom"><svg class="icon16"><use href="#lens"/></svg></button>
          <button aria-label="Zoom selection" disabled><svg class="icon16"><use href="#lens-off"/></svg></button>
          <button aria-label="Zoom area"><svg class="icon16"><use href="#lens-area"/></svg></button>
          <button aria-label="Zoom fit"><svg class="icon16"><use href="#lens-fit"/></svg></button>
          <button aria-label="Mini view"><svg class="icon16 soft"><use href="#mini"/></svg></button>
          <button aria-label="Zoom window"><svg class="icon16"><use href="#lens-window"/></svg></button>
          <span class="sep"></span>
          <button aria-label="Center"><svg class="icon16"><use href="#target"/></svg></button>
          <span class="sep"></span>
          <button aria-label="Select area"><svg class="icon16"><use href="#sel-rect"/></svg></button>
          <button aria-label="Select lasso"><svg class="icon16"><use href="#sel-line"/></svg></button>
          <button aria-label="Select from list"><svg class="icon16"><use href="#sel-list"/></svg></button>
          <span class="sep"></span>
          <button aria-label="Move"><svg class="icon16"><use href="#link2"/></svg></button>
          <button aria-label="Stretch"><svg class="icon16"><use href="#stretch"/></svg></button>
          <button aria-label="Rotate"><svg class="icon16"><use href="#poly-a"/></svg></button>
          <button aria-label="Align"><svg class="icon16"><use href="#poly-b"/></svg></button>
          <span class="sep"></span>
          <button aria-label="Measure line"><svg class="icon16"><use href="#line-a"/></svg></button>
          <button aria-label="Measure point"><svg class="icon16"><use href="#line-b"/></svg></button>
          <button aria-label="Count"><svg class="icon16"><use href="#dim-3"/></svg></button>
          <button aria-label="Dimension"><svg class="icon16"><use href="#dim"/></svg></button>
          <span class="sep"></span>
          <button aria-label="Ruler"><svg class="icon16"><use href="#ruler"/></svg></button>
          <button aria-label="Copy"><svg class="icon16"><use href="#copy"/></svg></button>
          <button aria-label="Array"><svg class="icon16"><use href="#array"/></svg></button>
          <button aria-label="Cost"><svg class="icon16"><use href="#cost"/></svg></button>
          <button aria-label="Explode"><svg class="icon16"><use href="#cross"/></svg></button>
        </div>
      </div>

      <footer class="viewbar">
        <button>Normal</button><button class="current">Flooring</button><button>Install</button><button>Cove base</button><button>TAGS</button><button>All</button>
        <button class="dots" aria-label="More"><svg viewBox="0 0 6 18"><circle cx="3" cy="3" r="2"/><circle cx="3" cy="9" r="2"/><circle cx="3" cy="15" r="2"/></svg></button>
        <div class="view-modes">
          <button class="current">2D</button><button>3D</button>
          <button class="split" aria-label="Split view"><svg class="icon16" viewBox="0 0 16 16"><path d="M4.500.5h7v5h-7zM0 8h16M4.500 10.500h7v5h-7z"/></svg></button>
          <button class="paper">Paper</button>
        </div>
      </footer>
    </main>
  </div>
</body>
</html>
```
FILE: styles.css
```css
* {
  margin: 0;
  padding: 0;
  box-sizing: border-box;
}

html, body {
  height: 100%;
}

body {
  display: flex;
  flex-direction: column;
  overflow: hidden;
  font-family: "Open Sans", "Noto Sans", sans-serif;
  font-size: 12px;
  line-height: 16px;
  color: #111;
  background: #fdfefd;
}

button, select {
  font: inherit;
  color: inherit;
}

button {
  display: flex;
  align-items: center;
  justify-content: center;
  flex: none;
  background: none;
  border: none;
  white-space: nowrap;
}

/* icons */
.sprite {
  position: absolute;
  width: 0;
  height: 0;
}

svg {
  flex: none;
  fill: none;
  stroke: #222;
  overflow: visible;
}

.icon10 { width: 10px; height: 10px; }
.icon16 { width: 16px; height: 16px; }
.icon20 { width: 20px; height: 20px; }
.icon22 { width: 22px; height: 22px; }

.soft, .faded { stroke: #666; }

.f-white { fill: #fdfdfd; }
.f-black { fill: #2b343e; }
.f-gray { fill: #e4e5e8; }
.f-dim { fill: #a5a6a8; }
.f-dark-gray { fill: #c4c5c7; }
.f-blue { fill: #b4d0e8; }
.f-light-blue { fill: #d3e3f1; }
.f-steel { fill: #7b9fbc; }
.f-deep-blue { fill: #5a9acb; }
.f-orange { fill: #f5c98a; }
.f-light-orange { fill: #fbdcae; }
.f-deep-orange { fill: #d9752b; }
.f-cream { fill: #fdf3cf; }
.f-yellow { fill: #fbd75e; }
.f-green { fill: #b6dcba; }
.f-pale-green { fill: #dbe9dc; }
.f-pink { fill: #e9b9c0; }
.f-brown { fill: #a88078; }
.f-purple { fill: #b65cb4; }
.f-sketch { fill: #14639c; stroke: #14639c; }
.s-white { stroke: #fff; }
.s-pale { stroke: #ecc8ea; }
.s-mute { stroke: #5c6b62; }
.s-light { stroke: #aaa; }
.s-red { stroke: #c0392b; }
.s-brown { stroke: #8a5a1c; }
.s-none { stroke: none; }
.s-mid { stroke: #1b2733; }
.s-bold { stroke-width: 2; }

/* title bar */
.titlebar {
  display: flex;
  align-items: center;
  flex: none;
  height: 32px;
  padding: 0 3px 0 9px;
  background: #4479a2;
  color: #cfdfea;
}

.titlebar svg { stroke: #9fbfd7; }
.title { margin-left: 8px; }

.feedback {
  margin-left: auto;
  margin-right: 10px;
  color: inherit;
  text-decoration: none;
}

.title-btn { width: 46px; height: 32px; }
.avatar-btn { width: 50px; }
.bell-btn { margin-right: 8px; }

.avatar {
  display: flex;
  align-items: flex-end;
  justify-content: center;
  width: 18px;
  height: 18px;
  border-radius: 50%;
  background: #31506b;
}

.avatar-head {
  width: 10px;
  height: 15px;
  border-radius: 5px 5px 3px 3px;
  background: #6d879c;
}

/* menu bar */
.menubar {
  display: flex;
  align-items: center;
  flex: none;
  height: 30px;
  padding-left: 7px;
  border-bottom: 1px solid #b5b5b5;
}

.menus { display: flex; gap: 10px; }
.quick { display: flex; gap: 10px; }

.sep {
  flex: none;
  width: 1px;
  height: 18px;
  margin: 0 12px;
  background: #b5b5b5;
}

.drop {
  gap: 4px;
  height: 24px;
  padding: 0 3px;
  border-radius: 3px;
}

.menubar > .drop { padding: 0; }

.mode {
  width: 24px;
  height: 24px;
  border-radius: 3px;
}

.on { background: #c9ddee; }

.menubar-right {
  display: flex;
  align-items: center;
  gap: 4px;
  margin-left: auto;
  padding-right: 3px;
}

.menubar-right .sep { margin: 0 3px; }

.price {
  width: 117px;
  height: 24px;
  margin-left: 5px;
  padding: 4px 5px;
  border-radius: 3px;
  background: #f0f0f1;
  text-align: right;
}

/* sidebar */
.main {
  display: flex;
  flex: 1;
  min-height: 0;
}

.sidebar {
  display: flex;
  flex-direction: column;
  flex: none;
  width: 367px;
  border-right: 1px solid #b5b5b5;
}

select {
  appearance: none;
  height: 24px;
  padding: 0 20px 0 4px;
  border: 1px solid #aaa;
  border-radius: 3px;
  background: #fdfefd url("data:image/svg+xml,%3Csvg xmlns='http://www.w3.org/2000/svg' width='10' height='10' fill='none' stroke='%23444'%3E%3Cpath d='M1 3l4 4 4-4'/%3E%3C/svg%3E") no-repeat right 4px center;
}

.tabset {
  display: flex;
  align-items: center;
  height: 29px;
  padding-left: 5px;
  border-bottom: 1px solid #b5b5b5;
  background: #f7f7f8;
}

.tabset select { width: 191px; margin-right: 4px; }
.tabset button { width: 28px; height: 28px; }
.tabset .collapse { margin-left: auto; margin-right: 12px; }
.collapse svg { transform: rotate(90deg); }

.sidebar-body {
  display: flex;
  flex: 1;
  min-height: 0;
}

.panel {
  display: flex;
  flex-direction: column;
  flex: 1;
  min-width: 0;
  border-right: 1px solid #b5b5b5;
  background: #f7f7f8;
}

.panel-head {
  display: flex;
  align-items: center;
  gap: 7px;
  flex: none;
  height: 47px;
  padding: 8px 17px 0 15px;
  border-bottom: 1px solid #b5b5b5;
  background: #fdfefd;
}

.panel-head h1 {
  flex: 1;
  font-size: 13px;
  font-weight: 400;
}

/* the thumb of the panel's scroll bar is drawn on the right */
.panel-scroll {
  flex: 1;
  min-height: 0;
  overflow: hidden;
  padding: 0 15px 0 14px;
  background: linear-gradient(#999, #999) no-repeat right 3px top 11px / 2px 71%;
}

section {
  padding: 0 2px 16px;
  border-top: 1px solid #aaa;
}

section:first-child { border-color: transparent; }

section h2 {
  display: flex;
  align-items: center;
  gap: 7px;
  height: 31px;
  padding: 0 2px 2px 3px;
  font-size: 13px;
  font-weight: 600;
}

.acts {
  display: flex;
  gap: 12px;
  margin-left: auto;
}

.acts svg { stroke: #666; }

.tools { display: flex; gap: 8px; }
.second { margin-top: 4px; }

.tool {
  min-width: 40px;
  min-height: 40px;
}

.tool.big { width: 44px; height: 44px; }

.tool, .card, .wide {
  border: 1px solid #e4e4e5;
  border-radius: 3px;
  background: #fdfefd;
}

.tool.active {
  position: relative;
  border-color: #3e6f97;
}

/* mouse pointer over the active tool */
.pointer {
  position: absolute;
  left: 19px;
  top: 31px;
  width: 28px;
  height: 38px;
  fill: #b800f0;
  stroke: #111;
  stroke-width: 2;
}

.cards {
  display: grid;
  grid-template-columns: repeat(4, 1fr);
  gap: 8px;
}

.card {
  flex-direction: column;
  gap: 2px;
  height: 64px;
  white-space: normal;
}

.card span {
  display: flex;
  align-items: center;
  height: 28px;
  line-height: 13px;
}

.card, .wide, .lib { font-size: 11px; }

.wide {
  gap: 4px;
  width: 100%;
  height: 35px;
  margin-top: 8px;
}

.tabs {
  display: flex;
  align-items: flex-end;
  height: 27px;
  padding-left: 4px;
}

.tabs button {
  height: 24px;
  padding: 0 3px;
  border: 1px solid #b5b5b5;
  border-bottom: none;
  background: #dfdfdf;
}

.tabs .current {
  height: 26px;
  padding-bottom: 2px;
  background: #f7f7f8;
}

.browser {
  display: flex;
  flex-direction: column;
  align-items: center;
  height: 140px;
  margin: 0 6px 0 1px;
  padding-top: 4px;
  border: 1px solid #b5b5b5;
  background: #fdfefd;
}

.browser select { width: 150px; }

.library {
  align-self: stretch;
  flex: 1;
  padding: 3px 8px;
  border-right: 3px solid #d5d5d6;
}

.lib {
  gap: 8px;
  height: 42px;
}

/* icon rail */
.rail {
  width: 52px;
  background: #fbfbfc;
}

.group {
  border-bottom: 1px solid #e0e0e1;
  background: #f6f7f8;
}

.group button {
  position: relative;
  width: 100%;
  height: 34px;
}

.group button:last-child { height: 33px; }
.group .current { height: 32px; background: #c9ddee; }
.compact button { height: 32px; }
.compact button:last-child { height: 31px; }

.more::after {
  content: "";
  position: absolute;
  right: 3px;
  top: 15px;
  width: 3px;
  height: 3px;
  border-radius: 50%;
  background: #888;
}

/* drawing area */
.workspace {
  display: flex;
  flex-direction: column;
  flex: 1;
  min-width: 0;
}

.canvas {
  position: relative;
  flex: 1;
  min-height: 0;
  overflow: hidden;
}

.plan {
  display: block;
  width: 100%;
  height: 100%;
}

.floor, .wall, .cutout { stroke: #000; stroke-width: 2; }
.floor { fill: #efeff0; }
.cutout { fill: #fdfefd; }
.thin { stroke: #000; stroke-width: 1; }

.view-tools {
  position: absolute;
  left: 4px;
  top: 4px;
  display: flex;
  align-items: center;
  height: 32px;
  border: 1px solid #b5b5b5;
  border-radius: 4px;
  background: #f7f7f8;
}

.view-tools button { width: 29px; height: 28px; }
.view-tools .sep { margin: 0 3px 0 2px; height: 20px; }

/* bottom bar */
.viewbar {
  display: flex;
  flex: none;
  height: 26px;
  border-top: 1px solid #b5b5b5;
}

.viewbar button {
  padding: 0 12px 1px;
  border-top: 3px solid transparent;
  border-bottom: 3px solid transparent;
}

.viewbar .current {
  border-color: #3e6f97 transparent #c9ddee;
  background: #c9ddee;
}

.viewbar .dots { padding: 0 9px; }

.dots svg {
  width: 6px;
  height: 18px;
  fill: #222;
  stroke: none;
}

.view-modes {
  display: flex;
  margin-left: auto;
}

.viewbar .split { padding: 0 10px; }
.viewbar .paper { padding: 0 8px 1px; }
```
